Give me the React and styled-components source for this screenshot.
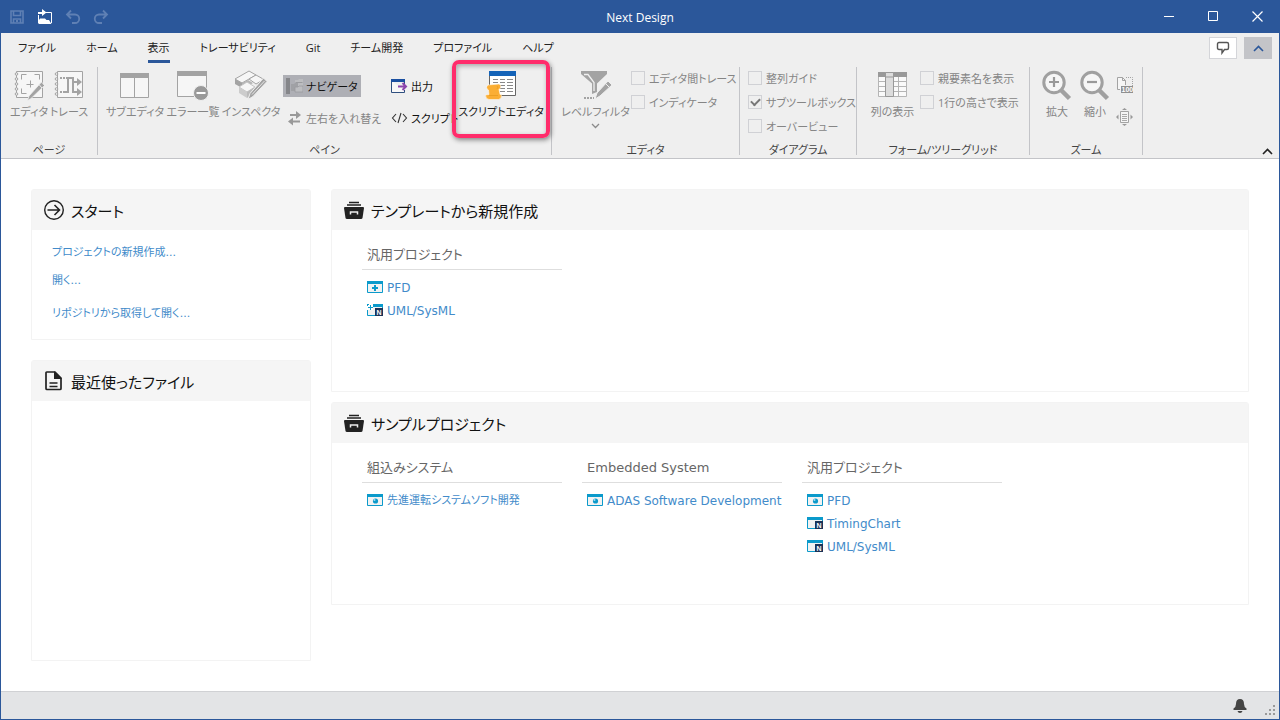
import React from 'react'
import styled, { createGlobalStyle } from 'styled-components'

const GlobalStyle = createGlobalStyle`
    *, *::before, *::after {
        box-sizing: border-box;
    }

    body {
        margin: 0;
        font-family: "Open Sans", "Noto Sans CJK JP", sans-serif;
        font-feature-settings: "palt";
        font-size: 11px;
        line-height: 16px;
        color: #222;
    }

    button {
        font: inherit;
        font-feature-settings: inherit;
        color: inherit;
        padding: 0;
        border: 0;
        background: none;
        white-space: nowrap;
    }

    svg {
        display: block;
        flex: none;
    }
`

const Window = styled.div`
    display: flex;
    flex-direction: column;
    min-height: 100vh;
    border: 1px solid #2b579a;
    border-top: 0;
    background: #fff;
`

const Text = styled.span`
    display: block;
    padding-top: 2px;
`

/* title bar */

const TitleBar = styled.header`
    display: grid;
    grid-template-columns: 1fr auto 1fr;
    align-items: center;
    height: 33px;
    background: #2b579a;
    color: #fff;
`

const QuickAccess = styled.div`
    display: flex;
    gap: 12px;
    padding-left: 8px;
`

const QuickButton = styled.button`
    color: ${props => props.disabled ? '#5f80b4' : '#fff'};
`

const AppTitle = styled.h1`
    margin: 0;
    padding-top: 2px;
    font-size: 12px;
    font-weight: 400;
`

const WindowButtons = styled.div`
    display: flex;
    justify-content: flex-end;
`

const WindowButton = styled.button`
    display: flex;
    align-items: center;
    justify-content: center;
    width: 44px;
    height: 33px;
`

/* ribbon */

const Ribbon = styled.div`
    position: relative;
    background: #efefef;
    border-bottom: 1px solid #c3c4c8;
`

const TabRow = styled.div`
    display: flex;
    justify-content: space-between;
    height: 34px;
    padding: 4px 7px 0 2px;
`

const Tabs = styled.nav`
    display: flex;
`

const Tab = styled.button`
    display: flex;
    flex-direction: column;
    align-items: center;
    padding: 2px 15px 0;
`

const TabText = styled.span`
    display: block;
    height: 24px;
    line-height: 18px;
    border-bottom: 3px solid ${props => props.$active ? '#2b579a' : 'transparent'};
`

const TabTools = styled.div`
    display: flex;
    gap: 7px;
`

const ToolButton = styled.button`
    display: flex;
    align-items: center;
    justify-content: center;
    width: 28px;
    height: 22px;
    border: 1px solid ${props => props.$pressed ? '#c3c4c8' : '#d4d5d9'};
    background: ${props => props.$pressed ? '#c3c4c8' : '#fff'};
`

const Groups = styled.div`
    display: grid;
    grid-template-columns: 97px 454px 188px 117px 173px 113px;
    height: 91px;
    padding-bottom: 3px;
`

const Group = styled.section`
    display: flex;
    flex-direction: column;
    justify-content: space-between;
    border-right: 1px solid #c3c4c8;
`

const GroupBody = styled.div`
    display: flex;
    padding: 3px 0 0 8px;
`

const GroupLabel = styled.div`
    height: 12px;
    line-height: 14px;
    text-align: center;
    color: #444;
`

const BigButton = styled.button`
    display: flex;
    flex-direction: column;
    align-items: center;
    gap: 3px;
    width: ${props => props.$width || 58}px;
    color: ${props => props.disabled ? '#858585' : '#222'};
`

const SmallColumn = styled.div`
    display: flex;
    flex-direction: column;
    align-items: flex-start;
    gap: 10px;
    width: ${props => props.$width}px;
    padding-top: 5px;
`

const SmallButton = styled.button`
    display: flex;
    align-items: center;
    gap: 3px;
    height: 22px;
    padding: 0 3px;
    background: ${props => props.$pressed ? '#aeafb5' : 'none'};
    color: ${props => props.disabled ? '#858585' : '#111'};
`

const SmallColumns = styled.div`
    display: flex;
    padding-left: 3px;
`

const CheckColumn = styled.div`
    display: flex;
    flex-direction: column;
    gap: 8px;
`

const CheckLabel = styled.label`
    display: flex;
    align-items: center;
    gap: 4px;
    height: 16px;
    color: #858585;
    white-space: nowrap;

    input {
        appearance: none;
        flex: none;
        display: grid;
        place-items: center;
        width: 14px;
        height: 14px;
        margin: 0;
        border: 1px solid #d0d1d5;
    }

    input:checked::after {
        content: "";
        width: 9px;
        height: 6px;
        margin-bottom: 3px;
        border: solid #777;
        border-width: 0 0 2px 2px;
        transform: rotate(-45deg);
    }
`

const ZoomColumn = styled.div`
    display: flex;
    flex-direction: column;
    gap: 14px;
    padding: 6px 0 0 2px;
`

const CollapseButton = styled.button`
    position: absolute;
    right: 6px;
    bottom: 3px;
`

const Highlight = styled.div`
    position: relative;

    &::after {
        content: "";
        position: absolute;
        top: -10px;
        left: -5px;
        right: -5px;
        height: 78px;
        border: 4px solid #ff2c6b;
        border-radius: 7px;
        box-shadow: 1px 2px 5px rgba(0, 0, 0, 0.45), inset 1px 2px 5px rgba(0, 0, 0, 0.3);
        pointer-events: none;
    }
`

/* start page */

const Main = styled.main`
    flex: 1;
    display: flex;
    align-items: flex-start;
    gap: 20px;
    padding: 30px;
`

const Side = styled.div`
    display: flex;
    flex-direction: column;
    gap: 20px;
    width: 280px;
`

const Content = styled.div`
    flex: 1;
    display: flex;
    flex-direction: column;
    gap: 10px;
`

const Panel = styled.section`
    min-height: ${props => props.$height}px;
    border: 1px solid #f3f3f3;
    border-radius: 3px 3px 0 0;
`

const PanelHeader = styled.h2`
    display: flex;
    align-items: center;
    gap: 6px;
    height: 40px;
    margin: 0;
    padding: 0 11px;
    background: #f5f5f5;
    font-size: 15px;
    font-weight: 400;
    line-height: 20px;
    color: #111;
`

const Link = styled.a`
    display: flex;
    align-items: center;
    gap: 4px;
    height: 18px;
    font-family: "DejaVu Sans", "Noto Sans CJK JP", sans-serif;
    font-size: ${props => props.$latin ? 12 : 11}px;
    color: #428bca;
    text-decoration: none;
    white-space: nowrap;
`

const StartLinks = styled.div`
    display: flex;
    flex-direction: column;
    gap: 15px;
    padding: 13px 20px;
`

const LinkGroup = styled.div`
    display: flex;
    flex-direction: column;
    gap: 10px;
`

const Categories = styled.div`
    display: flex;
    gap: 20px;
    padding: 12px 30px;
`

const Category = styled.div`
    width: 200px;
`

const CategoryTitle = styled.h3`
    height: 28px;
    margin: 0 0 8px;
    padding: 0 5px;
    border-bottom: 1px solid #dedede;
    font-family: "DejaVu Sans", "Noto Sans CJK JP", sans-serif;
    font-size: 13px;
    font-weight: 400;
    line-height: 26px;
    color: #666;
`

const CategoryLinks = styled.div`
    display: flex;
    flex-direction: column;
    gap: 5px;
    padding-left: 5px;
`

const StatusBar = styled.footer`
    display: flex;
    align-items: center;
    justify-content: flex-end;
    gap: 18px;
    height: 28px;
    padding-right: 4px;
    border-top: 1px solid #d0d1d4;
    background: #e3e4e6;
`

const Grip = styled.div`
    align-self: flex-end;
    padding-bottom: 4px;
`

const SvgText = styled.text`
    font-family: "Liberation Sans", sans-serif;
    font-weight: 700;
    fill: #fff;
`

/* icons */

const gray = '#a3a3a3'

const Svg = ({ w, h, children, ...rest }) => (
    <svg width={w} height={h} viewBox={`0 0 ${w} ${h}`} fill='none' aria-hidden='true' {...rest}>{children}</svg>
)

const SaveIcon = () => (
    <Svg w={16} h={16}>
        <path d='M2 2h12v12H2zM4.500 2v4.500h7V2M4.500 14v-4h7v4' stroke='currentColor' strokeWidth='1.600' />
        <path d='M7 11h2v2H7z' fill='currentColor' />
    </Svg>
)

const OpenIcon = () => (
    <Svg w={16} h={16}>
        <path d='M1.500 14.500V6M8 3.500h6.500V14' stroke='currentColor' />
        <path d='M2 15V11l1-1.500h5L9.500 11H12l2.500 4zM1 3h4V0l4.500 3.500L5 7V5H1z' fill='currentColor' />
    </Svg>
)

const UndoIcon = () => (
    <Svg w={16} h={16}>
        <path d='M6 1.500L2 5.500l4 4M2.500 5.500H10a4 4 0 0 1 0 8.500H7' stroke='currentColor' strokeWidth='1.800' />
    </Svg>
)

const RedoIcon = () => (
    <Svg w={16} h={16}>
        <path d='M10 1.500l4 4-4 4M13.500 5.500H6a4 4 0 0 0 0 8.500h3' stroke='currentColor' strokeWidth='1.800' />
    </Svg>
)

const MinimizeIcon = () => <Svg w={11} h={11}><path d='M0 5.500h10' stroke='#fff' /></Svg>
const MaximizeIcon = () => <Svg w={11} h={11}><path d='M.5 .5h9v9h-9z' stroke='#fff' /></Svg>
const CloseIcon = () => <Svg w={11} h={11}><path d='M.5 .5l10 10M10.500 .5l-10 10' stroke='#fff' strokeWidth='1.200' /></Svg>

const CommentIcon = () => (
    <Svg w={14} h={14}>
        <path d='M3 1.500h8q1.500 0 1.500 1.500v4q0 1.500-1.500 1.500H8.500L6 12V8.500H3q-1.500 0-1.500-1.500V3Q1.500 1.500 3 1.500z' stroke='#555' strokeWidth='1.400' />
    </Svg>
)

const ChevronUp = ({ color }) => <Svg w={11} h={7}><path d='M1 6l4.500-4.500L10 6' stroke={color} strokeWidth='1.600' /></Svg>
const ChevronDown = () => <Svg w={9} h={6}><path d='M1 1l3.500 3.500L8 1' stroke='#8b8b8b' strokeWidth='1.300' /></Svg>

const Binding = () => (
    <g fill='#efefef' stroke={gray}>
        {[4, 9, 14, 19, 24].map(y => <circle key={y} cx='2.500' cy={y} r='1.300' />)}
    </g>
)

const EditorIcon = () => (
    <Svg w={30} h={31}>
        <path d='M2.500 1.500h26v26h-26z' fill='#f6f6f6' stroke={gray} />
        <Binding />
        <path d='M7.500 9.500v-5h5M20.500 4.500h5v5M7.500 18.500v5h5M12.500 14.500h7M16.500 10.500v7' stroke={gray} />
        <path d='M27.500 12l3 3.500L17 28.500l-3.500 2 1.500-4.500z' fill={gray} stroke='#efefef' strokeWidth='.8' />
        <path d='M25 14.500l3 3.500' stroke='#efefef' />
    </Svg>
)

const TraceIcon = () => (
    <Svg w={30} h={31}>
        <path d='M3.500 1.500h25v26h-25z' fill='#f6f6f6' stroke={gray} />
        <Binding />
        <path d='M12 8h7v14h5M11 22h3V8M19 12h4' stroke={gray} strokeWidth='2' />
        <path d='M6 8h6M6 22h6' stroke={gray} strokeWidth='2' strokeDasharray='2 1' />
        <path d='M23 8l5 4-5 4zM23 18l5 4-5 4z' fill={gray} />
    </Svg>
)

const SubEditorIcon = () => (
    <Svg w={30} h={31}>
        <path d='M.5 4.500h28v23H.5zM14.500 8v20' fill='#f6f6f6' stroke={gray} />
        <path d='M0 3h29v5H0z' fill={gray} />
    </Svg>
)

const ErrorListIcon = () => (
    <Svg w={32} h={31}>
        <path d='M.5 2.500h29v24H.5z' fill='#f6f6f6' stroke={gray} />
        <path d='M0 1h30v5H0z' fill={gray} />
        <circle cx='24' cy='23' r='7.500' fill='#999' stroke='#efefef' />
        <path d='M19.500 23h9' stroke='#fff' strokeWidth='2' />
    </Svg>
)

const InspectorIcon = () => (
    <Svg w={32} h={31}>
        <path d='M0 9L14 1l7 4-14 8z' fill='#f6f6f6' stroke={gray} />
        <path d='M0 9l7 4v5l-7-4z' fill={gray} />
        <path d='M7 13l6-3 5 3-6 4v3l-5-2z' fill='#b5b5b5' />
        <path d='M14 9l7-4 8 4.500-8 4.500z' fill='#f6f6f6' stroke={gray} />
        <path d='M4 17l8-5 8 5-8 5z' fill='#f6f6f6' stroke='#c4c4c4' />
        <path d='M4 17l8 5v6l-8-5z' fill='#ccc' />
        <path d='M12 22l8-5v5l-8 6z' fill='#bbb' />
        <path d='M28.500 8l3.500 3.500L18 26.500l-5 3 2-6z' fill={gray} stroke='#efefef' />
        <path d='M17 24.500L29.500 11' stroke='#e6e6e6' />
    </Svg>
)

const NavigatorIcon = () => (
    <Svg w={17} h={16}>
        <path d='M0 0h4v16H0z' fill='#85868a' />
        <path d='M9 2h3l1-1h4v7H9z' fill='#bcbdc0' />
        <path d='M5 6h3l1-1h3v8H5z' fill='#a0a1a5' />
        <path d='M9 9h3l1-1h4v6H9z' fill='#bcbdc0' stroke='#9a9b9f' strokeWidth='.8' />
        <path d='M9.500 4.500h7' stroke='#9a9b9f' />
    </Svg>
)

const SwapIcon = () => (
    <Svg w={17} h={16}>
        <path d='M4 5h8M5 11.500h9' stroke='#999' strokeWidth='2' />
        <path d='M10 1l5 4-5 4zM7 7.500l-5 4 5 4z' fill='#999' />
    </Svg>
)

const OutputIcon = () => (
    <Svg w={17} h={16}>
        <path d='M.5 3v11.500h13V12M13.500 6V3' fill='#f8f8f8' stroke='#2f4f7f' />
        <path d='M0 1h14v3H0z' fill='#1a4fa0' />
        <path d='M7 8.500h8M11.500 5l3.500 3.500-3.500 3.500' stroke='#8b44ac' strokeWidth='2' />
    </Svg>
)

const CodeIcon = () => (
    <Svg w={17} h={16}>
        <path d='M5 4L1.500 8 5 12M12 4l3.500 4-3.500 4M10 3L7 13' stroke='#333' strokeWidth='1.100' />
    </Svg>
)

const ScriptEditorIcon = () => (
    <Svg w={32} h={31}>
        <path d='M4.500 2.500h26v23h-26z' fill='#fff' stroke='#666' />
        <path d='M4 1h27v5H4z' fill='#1463b8' />
        <path d='M8 9.500h5M8 12.500h5M15 9.500h5M15 12.500h5M15 15.500h5M15 18.500h5M15 21.500h5M22 9.500h6M22 12.500h6M22 15.500h6M22 18.500h6M22 21.500h6' stroke='#888' />
        <path d='M3 15l11-1q2.500 1 1.500 4l-1.500 1.500 1 5h1.500q.5 4.500-3 5H4q-3.500-.5-3.500-4.500L4 24.500 3.500 20q-3.500-2-.5-5z' fill='#fbae34' stroke='#fff' strokeWidth='.5' />
        <path d='M12 16q1.500 1 0 3M4 25.500h9' stroke='#e89a20' strokeWidth='.8' />
    </Svg>
)

const FilterIcon = () => (
    <Svg w={32} h={31}>
        <path d='M1 1h26v3L17 13.500V22l-5 2V13.500L1 4z' fill={gray} />
        <path d='M4 4.500h4l6 8V21' stroke='#f0f0f0' strokeWidth='1.300' />
        <path d='M28 11l4 4-12 11-5 3 2-6z' fill={gray} stroke='#efefef' />
        <path d='M25.500 13.500l4 4' stroke='#efefef' />
        <path d='M4 28h10' stroke={gray} strokeWidth='2' strokeDasharray='2 1' />
    </Svg>
)

const ColumnsIcon = () => (
    <Svg w={30} h={31}>
        <path d='M.5 3.500h28v23H.5z' fill='#fafafa' stroke='#b5b5b5' />
        <path d='M0 11.500h29M0 16.500h29M0 21.500h29M20.500 7v20' stroke='#b5b5b5' />
        <path d='M0 2h29v5H0z' fill='#999' />
        <path d='M7.500 2.500h8v24h-8z' fill='#dcdcdc' stroke='#999' />
        <path d='M7.500 7h8' stroke='#999' />
    </Svg>
)

const ZoomIcon = ({ plus }) => (
    <Svg w={30} h={31}>
        <path d='M18.500 19.500l9 9' stroke='#a0a0a0' strokeWidth='4.500' />
        <circle cx='12' cy='12.500' r='10.200' fill='#f6f6f6' stroke='#a0a0a0' strokeWidth='3' />
        <path d={plus ? 'M7 12h10M12 7v10' : 'M7 12h10'} stroke='#999' strokeWidth='2.200' />
    </Svg>
)

const ActualSizeIcon = () => (
    <Svg w={18} h={18}>
        <path d='M4 13.500H1.500V1.500h5l3 3V9' fill='#f6f6f6' stroke={gray} />
        <path d='M6.500 1.500v3h3' stroke={gray} />
        <path d='M10 1.500h6.500V10' stroke={gray} strokeDasharray='1 1' />
        <path d='M5 10h12v7H5z' fill='#909090' />
        <SvgText x='5.500' y='16' fontSize='7'>100</SvgText>
    </Svg>
)

const FitIcon = () => (
    <Svg w={18} h={18}>
        <path d='M4.500 3.500h8v11h-8z' fill='#f6f6f6' stroke={gray} />
        <path d='M6 6.500h5M6 8.500h5M6 10.500h5M6 12.500h5' stroke='#aaa' />
        <path d='M8.500 0l2.500 2H6zM8.500 18l2.500-2H6zM0 9l2.500-2.500v5zM17 9l-2.500-2.500v5z' fill='#999' />
    </Svg>
)

const StartIcon = () => (
    <Svg w={22} h={22}>
        <circle cx='11' cy='11' r='9.300' stroke='#222' strokeWidth='1.400' />
        <path d='M4.500 11h12M11.500 6l5 5-5 5' stroke='#222' strokeWidth='1.600' />
    </Svg>
)

const FileIcon = () => (
    <Svg w={22} h={22}>
        <path d='M3.800 2H12l6 6v10.500q0 1-1 1H4q-1 0-1-1V3q0-1 .8-1z' stroke='#222' strokeWidth='1.700' />
        <path d='M11 1l8 8h-8z' fill='#222' />
        <path d='M6.500 13h8M6.500 16.500h8' stroke='#222' strokeWidth='1.300' />
    </Svg>
)

const DrawerIcon = () => (
    <Svg w={22} h={22}>
        <path d='M6 3.500h10M4 6h14' stroke='#222' strokeWidth='1.400' />
        <path d='M2 8h18q1 0 1 1L19.500 19q-.2 1-1.500 1H4q-1.300 0-1.500-1L1 9q0-1 1-1z' fill='#222' />
        <path d='M7.500 15.500v-2.500h7v2.500' stroke='#eee' strokeWidth='1.500' />
    </Svg>
)

const ProjectIcon = ({ kind }) => (
    <Svg w={16} h={12}>
        <path d='M.5 .5h15v11H.5z' fill='#f2f2f2' stroke='#0b9acb' />
        <path d='M0 0h16v3H0z' fill='#0b9acb' />
        {kind === 'new' && <path d='M5 7h6M8 4v6' stroke='#0b9acb' strokeWidth='2' />}
        {kind === 'sample' && <><circle cx='8.500' cy='7' r='2.600' fill='#0b9acb' /><circle cx='7.500' cy='6' r='1' fill='#a5dcf0' /></>}
        {kind === 'newUml' && <><path d='M0 0h6v6H0z' fill='#fff' /><path d='M1 3.500h5M3.500 1v5M0 .5h2M.5 0v2' stroke='#0b9acb' /></>}
        {(kind === 'newUml' || kind === 'uml') && <><path d='M8 4h8v8H8z' fill='#1b3358' /><SvgText x='9.500' y='10.500' fontSize='7'>N</SvgText></>}
    </Svg>
)

const BellIcon = () => (
    <Svg w={14} h={16}>
        <path d='M7 1q4 0 4 5 0 3 2.500 4.500V12H.5v-1.500Q3 9 3 6q0-5 4-5zM4.500 13h5q-.5 2-2.500 2t-2.500-2z' fill='#444' />
    </Svg>
)

const GripIcon = () => (
    <Svg w={10} h={10}>
        <path d='M8 0h2v2H8zM8 4h2v2H8zM4 4h2v2H4zM8 8h2v2H8zM4 8h2v2H4zM0 8h2v2H0z' fill='#9a9a9a' />
    </Svg>
)

const tabs = ['ファイル', 'ホーム', '表示', 'トレーサビリティ', 'Git', 'チーム開発', 'プロファイル', 'ヘルプ']

const templates = [
    { title: '汎用プロジェクト', items: [['PFD', 'new'], ['UML/SysML', 'newUml']] }
]

const samples = [
    { title: '組込みシステム', items: [['先進運転システムソフト開発', 'sample']] },
    { title: 'Embedded System', items: [['ADAS Software Development', 'sample']] },
    { title: '汎用プロジェクト', items: [['PFD', 'sample'], ['TimingChart', 'uml'], ['UML/SysML', 'uml']] }
]

const isLatin = (name) => /^[A-Za-z/ ]+$/.test(name)

const Check = ({ children, checked }) => (
    <CheckLabel>
        <input type='checkbox' defaultChecked={checked} disabled />
        <Text>{children}</Text>
    </CheckLabel>
)

const ProjectPanel = ({ title, categories }) => (
    <Panel $height={203}>
        <PanelHeader><DrawerIcon /><Text>{title}</Text></PanelHeader>
        <Categories>
            {categories.map(category => (
                <Category key={category.title}>
                    <CategoryTitle>{category.title}</CategoryTitle>
                    <CategoryLinks>
                        {category.items.map(([name, kind]) => (
                            <Link href='#' key={name} $latin={isLatin(name)}><ProjectIcon kind={kind} /><Text>{name}</Text></Link>
                        ))}
                    </CategoryLinks>
                </Category>
            ))}
        </Categories>
    </Panel>
)

const App = () => {
    return (
        <Window>
            <GlobalStyle />
            <TitleBar>
                <QuickAccess>
                    <QuickButton disabled aria-label='保存'><SaveIcon /></QuickButton>
                    <QuickButton aria-label='開く'><OpenIcon /></QuickButton>
                    <QuickButton disabled aria-label='元に戻す'><UndoIcon /></QuickButton>
                    <QuickButton disabled aria-label='やり直し'><RedoIcon /></QuickButton>
                </QuickAccess>
                <AppTitle>Next Design</AppTitle>
                <WindowButtons>
                    <WindowButton aria-label='最小化'><MinimizeIcon /></WindowButton>
                    <WindowButton aria-label='最大化'><MaximizeIcon /></WindowButton>
                    <WindowButton aria-label='閉じる'><CloseIcon /></WindowButton>
                </WindowButtons>
            </TitleBar>

            <Ribbon>
                <TabRow>
                    <Tabs>
                        {tabs.map(tab => (
                            <Tab key={tab}><TabText $active={tab === '表示'}>{tab}</TabText></Tab>
                        ))}
                    </Tabs>
                    <TabTools>
                        <ToolButton aria-label='コメント'><CommentIcon /></ToolButton>
                        <ToolButton $pressed aria-label='リボン'><ChevronUp color='#2b579a' /></ToolButton>
                    </TabTools>
                </TabRow>
                <Groups>
                    <Group>
                        <GroupBody>
                            <BigButton $width={40} disabled><EditorIcon />エディタ</BigButton>
                            <BigButton $width={40} disabled><TraceIcon />トレース</BigButton>
                        </GroupBody>
                        <GroupLabel>ページ</GroupLabel>
                    </Group>
                    <Group>
                        <GroupBody>
                            <BigButton disabled><SubEditorIcon />サブエディタ</BigButton>
                            <BigButton disabled><ErrorListIcon />エラー一覧</BigButton>
                            <BigButton disabled><InspectorIcon />インスペクタ</BigButton>
                            <SmallColumns>
                                <SmallColumn $width={105}>
                                    <SmallButton $pressed><NavigatorIcon /><Text>ナビゲータ</Text></SmallButton>
                                    <SmallButton disabled><SwapIcon /><Text>左右を入れ替え</Text></SmallButton>
                                </SmallColumn>
                                <SmallColumn $width={69}>
                                    <SmallButton><OutputIcon /><Text>出力</Text></SmallButton>
                                    <SmallButton><CodeIcon /><Text>スクリプト</Text></SmallButton>
                                </SmallColumn>
                            </SmallColumns>
                            <Highlight>
                                <BigButton $width={88}><ScriptEditorIcon />スクリプトエディタ</BigButton>
                            </Highlight>
                        </GroupBody>
                        <GroupLabel>ペイン</GroupLabel>
                    </Group>
                    <Group>
                        <GroupBody>
                            <BigButton $width={71} disabled><FilterIcon />レベルフィルタ<ChevronDown /></BigButton>
                            <CheckColumn>
                                <Check>エディタ間トレース</Check>
                                <Check>インディケータ</Check>
                            </CheckColumn>
                        </GroupBody>
                        <GroupLabel>エディタ</GroupLabel>
                    </Group>
                    <Group>
                        <GroupBody>
                            <CheckColumn>
                                <Check>整列ガイド</Check>
                                <Check checked>サブツールボックス</Check>
                                <Check>オーバービュー</Check>
                            </CheckColumn>
                        </GroupBody>
                        <GroupLabel>ダイアグラム</GroupLabel>
                    </Group>
                    <Group>
                        <GroupBody>
                            <BigButton $width={55} disabled><ColumnsIcon />列の表示</BigButton>
                            <CheckColumn>
                                <Check>親要素名を表示</Check>
                                <Check>1行の高さで表示</Check>
                            </CheckColumn>
                        </GroupBody>
                        <GroupLabel>フォーム/ツリーグリッド</GroupLabel>
                    </Group>
                    <Group>
                        <GroupBody>
                            <BigButton $width={38} disabled><ZoomIcon plus />拡大</BigButton>
                            <BigButton $width={38} disabled><ZoomIcon />縮小</BigButton>
                            <ZoomColumn>
                                <button disabled aria-label='100%'><ActualSizeIcon /></button>
                                <button disabled aria-label='全体表示'><FitIcon /></button>
                            </ZoomColumn>
                        </GroupBody>
                        <GroupLabel>ズーム</GroupLabel>
                    </Group>
                </Groups>
                <CollapseButton aria-label='折りたたむ'><ChevronUp color='#222' /></CollapseButton>
            </Ribbon>

            <Main>
                <Side>
                    <Panel $height={151}>
                        <PanelHeader><StartIcon /><Text>スタート</Text></PanelHeader>
                        <StartLinks>
                            <LinkGroup>
                                <Link href='#'><Text>プロジェクトの新規作成...</Text></Link>
                                <Link href='#'><Text>開く...</Text></Link>
                            </LinkGroup>
                            <LinkGroup>
                                <Link href='#'><Text>リポジトリから取得して開く...</Text></Link>
                            </LinkGroup>
                        </StartLinks>
                    </Panel>
                    <Panel $height={301}>
                        <PanelHeader><FileIcon /><Text>最近使ったファイル</Text></PanelHeader>
                    </Panel>
                </Side>
                <Content>
                    <ProjectPanel title='テンプレートから新規作成' categories={templates} />
                    <ProjectPanel title='サンプルプロジェクト' categories={samples} />
                </Content>
            </Main>

            <StatusBar>
                <BellIcon />
                <Grip><GripIcon /></Grip>
            </StatusBar>
        </Window>
    )
}

export default App
